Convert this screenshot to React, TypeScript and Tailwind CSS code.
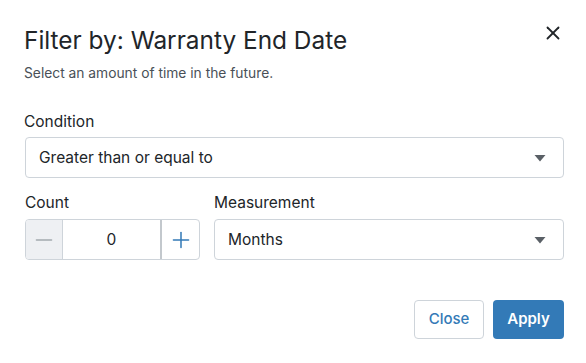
import { X, Minus, Plus } from "lucide-react";

function Caret() {
  return (
    <svg width="12" height="8" viewBox="0 0 12 8" className="text-[#5a6066]">
      <path d="M0.5 1h11L6 7.5z" fill="currentColor" />
    </svg>
  );
}

export default function App() {
  return (
    <div
      className="h-[363px] w-[586px] bg-white text-[#212529]"
      style={{ fontFamily: "Inter, 'Noto Sans', sans-serif" }}
    >
      <div className="pl-6 pr-[22px] pt-[25px]">
        {/* Header */}
        <div className="flex items-start justify-between">
          <h2 className="text-[24.4px] leading-[30px] font-normal">Filter by: Warranty End Date</h2>
          <button type="button" className="mr-[0px] mt-[-3px] text-[#212529]">
            <X size={22} strokeWidth={2} />
          </button>
        </div>
        <div className="mt-[8px] text-[13.8px] leading-5 text-[#495057]">Select an amount of time in the future.</div>

        {/* Condition */}
        <div className="mt-[29px] text-[15.5px] leading-5">Condition</div>
        <div className="mt-[5px] ml-px flex h-[41px] items-center justify-between rounded border border-[#ced4da] pl-[13px] pr-[17px] text-[15.5px]">
          <span>Greater than or equal to</span>
          <Caret />
        </div>

        {/* Count + Measurement */}
        <div className="mt-[15px] flex gap-[14px]">
          <div className="w-[176px] pl-px">
            <div className="text-[15.5px] leading-5">Count</div>
            <div className="mt-[6px] flex h-[41px] overflow-hidden rounded border border-[#ced4da] text-[15.5px]">
              <div className="flex w-[37px] items-center justify-center border-r border-[#ced4da] bg-[#eef0f3] text-[#a3a9af]">
                <Minus size={26} strokeWidth={1.4} />
              </div>
              <div className="flex flex-1 items-center justify-center border-r-2 border-[#c3c8cd]">0</div>
              <div className="flex w-[37px] items-center justify-center text-[#337ab7]">
                <Plus size={26} strokeWidth={1.4} />
              </div>
            </div>
          </div>
          <div className="flex-1">
            <div className="text-[15.5px] leading-5">Measurement</div>
            <div className="mt-[6px] flex h-[41px] items-center justify-between rounded border border-[#ced4da] pl-[13px] pr-[17px] text-[15.5px]">
              <span>Months</span>
              <Caret />
            </div>
          </div>
        </div>

        {/* Footer */}
        <div className="mt-[40px] flex justify-end gap-[9px]">
          <button
            type="button"
            className="h-[39px] w-[70px] rounded border border-[#ced4da] bg-white text-[15px] font-medium text-[#337ab7]"
          >
            Close
          </button>
          <button
            type="button"
            className="h-[39px] w-[71px] rounded bg-[#337ab7] text-[15px] font-semibold text-white"
          >
            Apply
          </button>
        </div>
      </div>
    </div>
  );
}
